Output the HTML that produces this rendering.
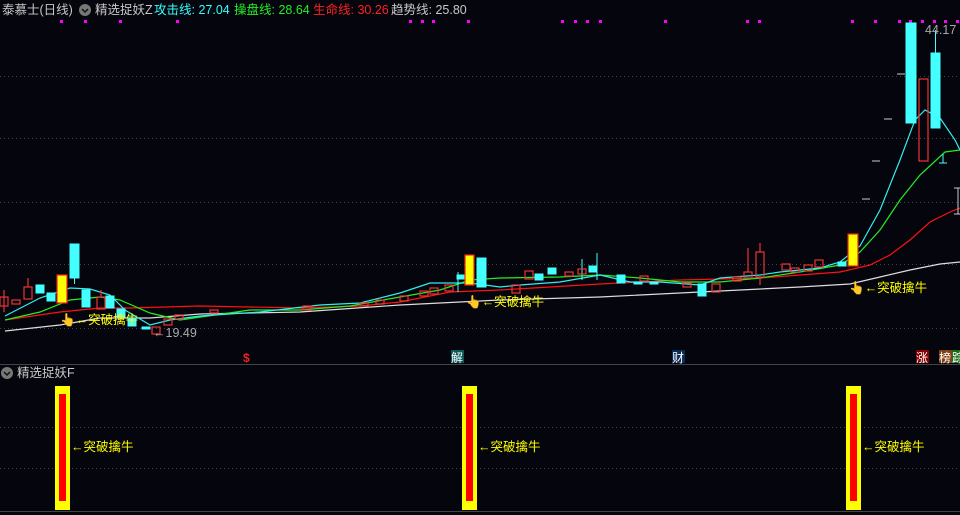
<!DOCTYPE html>
<html><head><meta charset="utf-8"><style>
body{margin:0;background:#05050d;width:960px;height:515px;overflow:hidden;font-family:"Liberation Sans","Noto Sans CJK SC",sans-serif}
svg{position:absolute;left:0;top:0}
text{font-family:"Liberation Sans","Noto Sans CJK SC",sans-serif}
</style></head><body>
<svg width="960" height="515" viewBox="0 0 960 515">
<rect width="960" height="515" fill="#05050d"/>
<g stroke="#444" stroke-width="1" stroke-dasharray="1 3">
<line x1="0" y1="76.5" x2="960" y2="76.5"/><line x1="0" y1="138.5" x2="960" y2="138.5"/>
<line x1="0" y1="202.5" x2="960" y2="202.5"/><line x1="0" y1="264.5" x2="960" y2="264.5"/>
<line x1="0" y1="328.5" x2="960" y2="328.5"/>
<line x1="0" y1="427.5" x2="960" y2="427.5"/><line x1="0" y1="468.5" x2="960" y2="468.5"/>
</g>
<line x1="0" y1="364.5" x2="960" y2="364.5" stroke="#444"/>
<line x1="0" y1="511.5" x2="960" y2="511.5" stroke="#444"/>
<!-- header -->
<text x="2" y="14" font-size="12.5" fill="#c8c8c8">泰慕士(日线)</text>
<circle cx="85" cy="10" r="6" fill="#777"/><path d="M82 9l3 3 3-3" stroke="#111" stroke-width="1.5" fill="none"/>
<text x="95" y="14" font-size="12.5" fill="#c8c8c8">精选捉妖Z</text>
<text x="154" y="14" font-size="12.5" fill="#3ff">攻击线: 27.04</text>
<text x="234" y="14" font-size="12.5" fill="#2e2">操盘线: 28.64</text>
<text x="313" y="14" font-size="12.5" fill="#f22">生命线: 30.26</text>
<text x="391" y="14" font-size="12.5" fill="#c8c8c8">趋势线: 25.80</text>
<g fill="#f0f">
<rect x="60" y="20" width="3" height="3"/><rect x="84" y="20" width="3" height="3"/><rect x="119" y="20" width="3" height="3"/><rect x="176" y="20" width="3" height="3"/>
<rect x="409" y="20" width="3" height="3"/><rect x="421" y="20" width="3" height="3"/><rect x="432" y="20" width="3" height="3"/><rect x="467" y="20" width="3" height="3"/>
<rect x="561" y="20" width="3" height="3"/><rect x="574" y="20" width="3" height="3"/><rect x="586" y="20" width="3" height="3"/><rect x="599" y="20" width="3" height="3"/><rect x="664" y="20" width="3" height="3"/>
<rect x="746" y="20" width="3" height="3"/><rect x="758" y="20" width="3" height="3"/><rect x="851" y="20" width="3" height="3"/><rect x="874" y="20" width="3" height="3"/>
<rect x="898" y="20" width="3" height="3"/><rect x="909" y="20" width="3" height="3"/><rect x="921" y="20" width="3" height="3"/><rect x="933" y="20" width="3" height="3"/><rect x="944" y="20" width="3" height="3"/><rect x="956" y="20" width="3" height="3"/>
</g>
<!-- lines -->
<g fill="none" stroke-width="1.2">
<polyline stroke="#ddd" points="5,331 60,325 100,318 150,318 200,314 300,312 400,305 500,300 600,297 700,292 800,287 850,284 880,277 910,270 940,264 960,262"/>
<polyline stroke="#f11" points="5,320 60,312 100,308 130,308 200,306 300,308 360,306 400,302 450,292 500,290 600,284 680,280 760,278 840,272 870,265 890,255 910,240 930,222 950,212 960,208"/>
<polyline stroke="#2e2" points="5,320 40,312 70,300 100,297 120,300 150,313 180,320 250,310 300,310 350,306 400,297 440,290 470,280 500,278 560,277 600,275 640,278 680,282 720,282 760,278 800,272 840,265 860,252 880,230 900,200 920,175 945,152 960,150"/>
<polyline stroke="#3ee" points="5,316 40,298 70,288 90,289 110,295 125,310 150,325 170,320 200,316 260,312 320,305 360,303 400,293 430,283 470,283 500,287 520,285 560,282 600,275 630,282 660,282 700,285 720,278 760,275 780,272 820,268 840,262 860,246 880,210 900,160 915,120 925,110 940,118 955,140 960,150"/>
</g>
<!-- candles cyan -->
<g fill="#4ff" stroke="#4ff">
<rect x="70" y="244" width="9" height="34"/><line x1="74.5" y1="278" x2="74.5" y2="284"/>
<rect x="36" y="285" width="8" height="8"/><rect x="47" y="293" width="8" height="8"/>
<rect x="82" y="290" width="8" height="17"/><rect x="106" y="296" width="8" height="12"/>
<rect x="117" y="309" width="8" height="8"/><rect x="128" y="318" width="8" height="8"/>
<rect x="142" y="327" width="8" height="2"/>
<rect x="477" y="258" width="9" height="29"/><rect x="535" y="274" width="8" height="6"/><rect x="548" y="268" width="8" height="6"/>
<rect x="589" y="266" width="8" height="6"/><rect x="617" y="275" width="8" height="8"/><rect x="698" y="284" width="8" height="12"/>
<rect x="634" y="282" width="8" height="2"/><rect x="650" y="282" width="8" height="2"/>
<rect x="838" y="262" width="8" height="4"/>
<rect x="906" y="23" width="10" height="100"/><rect x="931" y="53" width="9" height="75"/><line x1="935.5" y1="30" x2="935.5" y2="53"/>
<line x1="939" y1="163" x2="947" y2="163"/><line x1="943" y1="154" x2="943" y2="163"/>
<line x1="582" y1="259" x2="582" y2="280"/><line x1="597" y1="253" x2="597" y2="280"/>
<rect x="457" y="275" width="8" height="4"/><line x1="458" y1="272" x2="458" y2="292"/>
</g>
<!-- red hollow candles -->
<g fill="none" stroke="#e33" stroke-width="1.2">
<rect x="0" y="297" width="8" height="9"/><rect x="12" y="300" width="8" height="4"/><rect x="24" y="287" width="8" height="12"/>
<rect x="97" y="297" width="8" height="12"/><rect x="152" y="327" width="8" height="7"/><rect x="164" y="319" width="8" height="6"/>
<rect x="175" y="315" width="8" height="4"/><rect x="210" y="310" width="8" height="3"/><rect x="303" y="306" width="8" height="4"/>
<rect x="360" y="303" width="8" height="3"/><rect x="376" y="300" width="8" height="4"/><rect x="400" y="296" width="8" height="5"/>
<rect x="420" y="291" width="8" height="5"/><rect x="430" y="288" width="8" height="6"/><rect x="445" y="285" width="8" height="6"/>
<rect x="512" y="285" width="8" height="8"/><rect x="525" y="271" width="8" height="8"/><rect x="565" y="272" width="8" height="4"/>
<rect x="578" y="269" width="8" height="5"/><rect x="640" y="276" width="8" height="5"/><rect x="683" y="283" width="8" height="4"/>
<rect x="712" y="284" width="8" height="8"/><rect x="733" y="277" width="8" height="4"/><rect x="744" y="272" width="8" height="6"/>
<rect x="756" y="252" width="8" height="25"/><rect x="782" y="264" width="8" height="6"/><rect x="791" y="268" width="8" height="4"/>
<rect x="804" y="265" width="8" height="6"/><rect x="815" y="260" width="8" height="7"/>
<rect x="919" y="79" width="9" height="82"/>
<line x1="760" y1="243" x2="760" y2="252"/><line x1="760" y1="277" x2="760" y2="285"/><line x1="748" y1="248" x2="748" y2="272"/>
<line x1="28" y1="278" x2="28" y2="287"/><line x1="4" y1="290" x2="4" y2="312"/><line x1="101" y1="290" x2="101" y2="297"/>
</g>
<g stroke="#ccc"><line x1="884" y1="119" x2="892" y2="119"/><line x1="872" y1="161" x2="880" y2="161"/><line x1="862" y1="199" x2="870" y2="199"/><line x1="897" y1="74" x2="905" y2="74"/>
<line x1="958" y1="188" x2="958" y2="214"/><line x1="954" y1="214" x2="960" y2="214"/><line x1="954" y1="188" x2="960" y2="188"/></g>
<!-- yellow candles -->
<g fill="#ff0" stroke="#e22" stroke-width="1.2">
<rect x="57" y="275" width="10" height="28"/><rect x="465" y="255" width="9" height="30"/><rect x="848" y="234" width="10" height="32"/>
</g>
<!-- annotations -->
<g font-size="12.5" fill="#ff0">
<text x="60" y="324">👆←突破擒牛</text>
<text x="466" y="306">👆←突破擒牛</text>
<text x="849" y="292">👆←突破擒牛</text>
</g>
<text x="153" y="337" font-size="12.5" fill="#aaa">←19.49</text>
<text x="925" y="34" font-size="12.5" fill="#aaa">44.17</text>
<text x="243" y="362" font-size="12" fill="#e22" font-weight="bold">$</text>
<rect x="451" y="350" width="13" height="13" fill="#0a5a5a"/><text x="451" y="362" font-size="12" fill="#fff">解</text>
<rect x="672" y="350" width="13" height="13" fill="#0a2a55"/><text x="672" y="362" font-size="12" fill="#fff">财</text>
<rect x="916" y="350" width="13" height="13" fill="#800"/><text x="916" y="362" font-size="12" fill="#fff">涨</text>
<rect x="939" y="350" width="13" height="13" fill="#804010"/><text x="939" y="362" font-size="12" fill="#fff">榜</text>
<rect x="952" y="350" width="13" height="13" fill="#1a6a1a"/><text x="952" y="362" font-size="12" fill="#fff">踪</text>
<!-- bottom panel -->
<circle cx="7" cy="373" r="6" fill="#777"/><path d="M4 372l3 3 3-3" stroke="#111" stroke-width="1.5" fill="none"/>
<text x="17" y="377" font-size="12.5" fill="#c8c8c8">精选捉妖F</text>
<g>
<rect x="55" y="386" width="15" height="124" fill="#ff0"/><rect x="59" y="394" width="7" height="107" fill="#f00"/>
<rect x="462" y="386" width="15" height="124" fill="#ff0"/><rect x="466" y="394" width="7" height="107" fill="#f00"/>
<rect x="846" y="386" width="15" height="124" fill="#ff0"/><rect x="850" y="394" width="7" height="107" fill="#f00"/>
</g>
<g font-size="12.5" fill="#ff0">
<text x="71" y="451">←突破擒牛</text><text x="478" y="451">←突破擒牛</text><text x="862" y="451">←突破擒牛</text>
</g>
</svg>
</body></html>
